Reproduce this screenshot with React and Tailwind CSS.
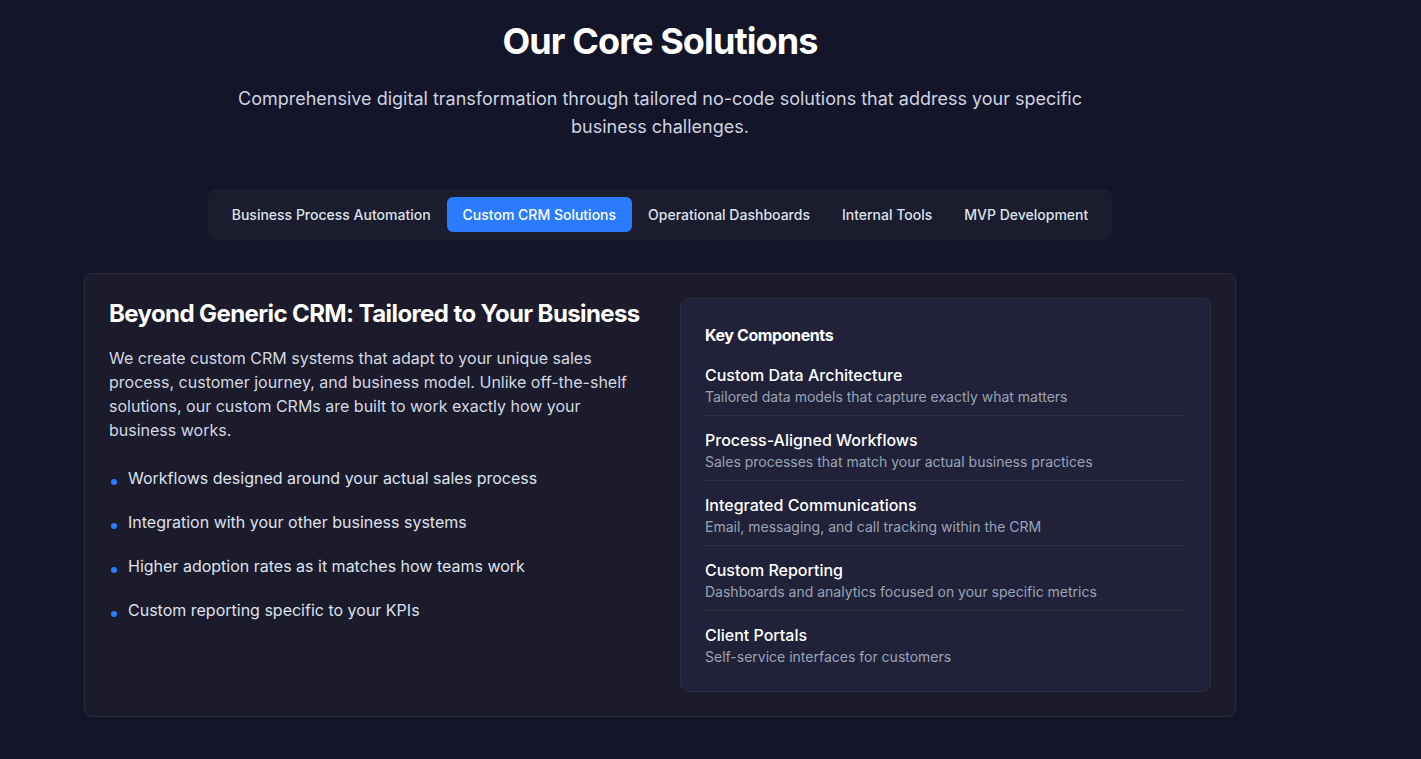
import React, { useState } from 'react';

const TABS = [
  'Business Process Automation',
  'Custom CRM Solutions',
  'Operational Dashboards',
  'Internal Tools',
  'MVP Development',
];

const BENEFITS = [
  'Workflows designed around your actual sales process',
  'Integration with your other business systems',
  'Higher adoption rates as it matches how teams work',
  'Custom reporting specific to your KPIs',
];

const COMPONENTS = [
  { title: 'Custom Data Architecture', desc: 'Tailored data models that capture exactly what matters' },
  { title: 'Process-Aligned Workflows', desc: 'Sales processes that match your actual business practices' },
  { title: 'Integrated Communications', desc: 'Email, messaging, and call tracking within the CRM' },
  { title: 'Custom Reporting', desc: 'Dashboards and analytics focused on your specific metrics' },
  { title: 'Client Portals', desc: 'Self-service interfaces for customers' },
];

export default function App() {
  const [active, setActive] = useState(1);

  return (
    <div className="min-h-screen bg-[#141528] text-white font-['Inter','Noto_Sans',sans-serif]">
      <section className="w-[1320px] pt-[19px] pb-10">
        <div className="text-center">
          <h2 className="text-4xl font-bold tracking-tight leading-[44px]">Our Core Solutions</h2>
          <p className="mt-[22px] max-w-4xl mx-auto text-lg leading-7 text-[#cdd3e0]">
            Comprehensive digital transformation through tailored no-code solutions that address your specific business challenges.
          </p>
        </div>

        <div className="mt-[48px] flex justify-center">
          <div className="inline-flex p-2 rounded-lg bg-[#1b1c2d]">
            {TABS.map((t, i) => (
              <button
                key={t}
                onClick={() => setActive(i)}
                className={`h-[35px] px-4 rounded-md text-sm font-medium leading-5 ${i === active ? 'bg-[#2b7bff] text-white' : 'text-[#dde2ec] hover:text-white'}`}
              >
                {t}
              </button>
            ))}
          </div>
        </div>

        <div className="mt-[33px] mx-auto max-w-6xl rounded-lg border border-[#2a2b3e] bg-[#1b1b2c] p-6">
          <div className="grid grid-cols-2 gap-10">
            <div>
              <h3 className="text-2xl font-bold leading-8 tracking-tight">Beyond Generic CRM: Tailored to Your Business</h3>
              <p className="mt-[16px] text-base leading-6 text-[#d3d8e2]">
                We create custom CRM systems that adapt to your unique sales process, customer journey, and business model. Unlike off-the-shelf solutions, our custom CRMs are built to work exactly how your business works.
              </p>
              <ul className="mt-6 flex flex-col gap-5">
                {BENEFITS.map(b => (
                  <li key={b} className="flex items-start text-base leading-6 text-[#dde2ec]">
                    <span className="mt-[13px] ml-[2px] mr-[11px] w-[6px] h-[6px] rounded-full bg-[#2b7bff] flex-shrink-0"></span>
                    {b}
                  </li>
                ))}
              </ul>
            </div>

            <div className="rounded-lg border border-[#2c2d42] bg-[#21223a] p-6">
              <h4 className="text-base font-bold leading-6 tracking-tight">Key Components</h4>
              <div className="mt-4 flex flex-col gap-3">
                {COMPONENTS.map(c => (
                  <div key={c.title} className="pb-2 border-b border-[#2e3045] last:pb-0 last:border-b-0">
                    <div className="text-base font-medium leading-6 text-white">{c.title}</div>
                    <div className="text-sm leading-5 text-[#9aa3b5]">{c.desc}</div>
                  </div>
                ))}
              </div>
            </div>
          </div>
        </div>
      </section>
    </div>
  );
}
